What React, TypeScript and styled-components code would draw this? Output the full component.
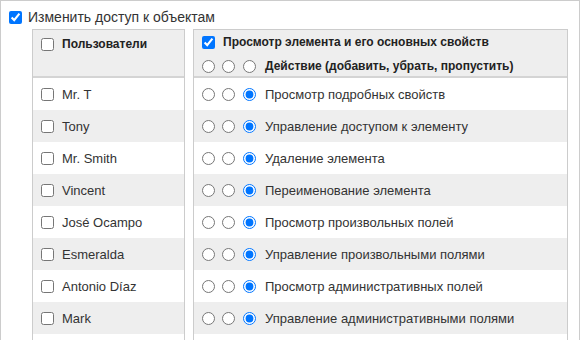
import React from 'react';
import styled, { createGlobalStyle } from 'styled-components';

const GlobalStyle = createGlobalStyle`
  html, body {
    margin: 0;
    padding: 0;
    background: #fff;
  }
  body {
    font-family: "Liberation Sans", Arial, sans-serif;
    font-size: 13px;
    color: #333;
  }
`;

const users = ['Mr. T', 'Tony', 'Mr. Smith', 'Vincent', 'José Ocampo', 'Esmeralda', 'Antonio Díaz', 'Mark', 'Lucy'];

const actions = [
  'Просмотр подробных свойств',
  'Управление доступом к элементу',
  'Удаление элемента',
  'Переименование элемента',
  'Просмотр произвольных полей',
  'Управление произвольными полями',
  'Просмотр административных полей',
  'Управление административными полями',
  'Просмотр журнала',
];

const Frame = styled.div`
  box-sizing: border-box;
  width: 580px;
  height: 340px;
  overflow: hidden;
  border: 1px solid #ccc;
  border-bottom: none;
  padding: 10px 11px 0 8px;
`;

const TopLabel = styled.label`
  display: flex;
  align-items: center;
  gap: 6px;
  height: 13px;
  line-height: 15px;
  font-size: 14px;
  margin-bottom: 5px;
`;

const Check = styled.input.attrs({ type: 'checkbox' })`
  width: 13px;
  height: 13px;
  margin: 0;
  flex: none;
`;

const Radio = styled.input.attrs({ type: 'radio' })`
  width: 13px;
  height: 13px;
  margin: 0;
  flex: none;
`;

const Tables = styled.div`
  display: flex;
  align-items: flex-start;
  gap: 8px;
  margin-left: 23px;
`;

const Table = styled.div<{ $width: number }>`
  box-sizing: border-box;
  width: ${(p) => p.$width}px;
  border: 1px solid #ccc;
  border-bottom: none;
`;

const Head = styled.div<{ $offset?: number }>`
  height: 48px;
  box-sizing: border-box;
  padding-top: ${(p) => p.$offset || 0}px;
  background: #eee;
  border-bottom: 2px solid #d4d4d4;
`;

const Line = styled.div`
  display: flex;
  align-items: center;
  height: 24px;
  padding-left: 8px;
  font-size: 12px;
  font-weight: bold;
  color: #222;
`;

const Row = styled.div<{ $odd: boolean }>`
  display: flex;
  align-items: center;
  height: 32px;
  padding-left: 8px;
  background: ${(p) => (p.$odd ? '#eee' : '#fff')};
  white-space: nowrap;
`;

const Radios = styled.div`
  display: flex;
  align-items: center;
  gap: 7px;
  margin-right: 9px;

  & > input:last-child {
    margin-left: 1px;
  }
`;

const Caption = styled.span<{ $gap: number }>`
  margin-left: ${(p) => p.$gap}px;
`;

const RadioGroup = ({ name, bold }: { name: string; bold?: boolean }) => (
  <Radios>
    <Radio name={name} readOnly />
    <Radio name={name} readOnly />
    <Radio name={name} defaultChecked={!bold} readOnly />
  </Radios>
);

const App = () => (
  <>
    <GlobalStyle />
    <Frame>
      <TopLabel>
        <Check defaultChecked />
        <span>Изменить доступ к объектам</span>
      </TopLabel>
      <Tables>
        <Table $width={153}>
          <Head $offset={2}>
            <Line>
              <Check />
              <Caption $gap={8}>Пользователи</Caption>
            </Line>
          </Head>
          {users.map((u, i) => (
            <Row key={u} $odd={i % 2 === 1}>
              <Check />
              <Caption $gap={8}>{u}</Caption>
            </Row>
          ))}
        </Table>
        <Table $width={375}>
          <Head>
            <Line>
              <Check defaultChecked />
              <Caption $gap={8}>Просмотр элемента и его основных свойств</Caption>
            </Line>
            <Line>
              <RadioGroup name="head" bold />
              <span>Действие (добавить, убрать, пропустить)</span>
            </Line>
          </Head>
          {actions.map((a, i) => (
            <Row key={a} $odd={i % 2 === 1}>
              <RadioGroup name={'act' + i} />
              <span>{a}</span>
            </Row>
          ))}
        </Table>
      </Tables>
    </Frame>
  </>
);

export default App;
